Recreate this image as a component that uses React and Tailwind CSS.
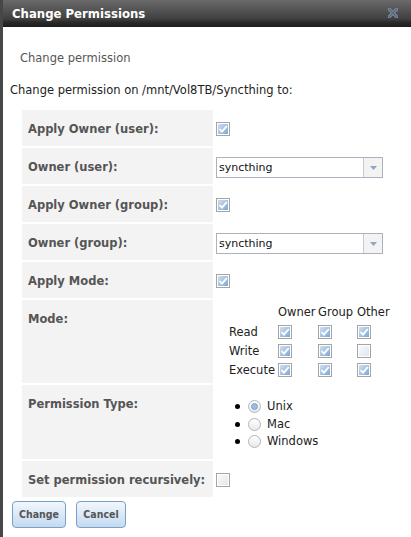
import React from "react";

function Check({ on = true }) {
  return (
    <span className="inline-block w-[14px] h-[14px] border border-[#a5a5a5] p-[1px] bg-white align-top">
      {on ? (
        <span className="relative block w-full h-full bg-[linear-gradient(135deg,#cfe0f2,#7ea7d4)]">
          <svg viewBox="0 0 10 10" className="absolute inset-0 w-full h-full">
            <path d="M1.6 5.2 L4 7.6 L8.8 2" fill="none" stroke="#ffffff" strokeWidth="1.9" />
          </svg>
        </span>
      ) : (
        <span className="block w-full h-full bg-[linear-gradient(135deg,#f7f9fc,#e1e7ef)]" />
      )}
    </span>
  );
}

function Radio({ on }) {
  return (
    <span className="inline-flex items-center justify-center w-[13px] h-[13px] rounded-full border border-[#b4b4b4] bg-[linear-gradient(180deg,#ffffff,#e6e9ee)]">
      {on && <span className="block w-[7px] h-[7px] rounded-full border border-[#7fa4cc] bg-[#9cbde0]" />}
    </span>
  );
}

function Select() {
  return (
    <div className="flex w-[167px] h-[21px] border border-[#abb2bd] bg-white">
      <div className="flex-1 pl-[2px] text-[11px] leading-[19px] text-[#111]">syncthing</div>
      <div className="w-[19px] border-l border-[#c5cad2] bg-[#f3f3f3] flex items-center justify-center">
        <svg viewBox="0 0 7 4" className="w-[7px] h-[4px]">
          <path d="M0 0 H7 L3.5 4 Z" fill="#8fa6c2" />
        </svg>
      </div>
    </div>
  );
}

function Row({ label, h = "h-[36px]", children, vclass = "pt-[12px]" }) {
  return (
    <div className={`flex ${h}`}>
      <div className="w-[191px] bg-[#f3f3f3] pl-[6px] pt-[12px] text-[11.5px] leading-[14px] font-bold text-[#555]">
        {label}
      </div>
      <div className={`flex-1 pl-[3px] ${vclass}`}>{children}</div>
    </div>
  );
}

export default function App() {
  return (
    <div className="w-[411px] h-[537px] bg-white border-l-[3px] border-[#474747] font-['DejaVu_Sans',sans-serif] overflow-hidden">
      <div className="relative h-[27px] bg-[linear-gradient(180deg,#6a6a6a_0%,#404040_70%,#2a2a2a_82%,#1c1c1c_100%)] flex items-center pl-[9px]">
        <span className="font-['DejaVu_Sans_Condensed','DejaVu_Sans',sans-serif] font-bold text-[13px] text-white leading-none">
          Change Permissions
        </span>
        <svg viewBox="0 0 11 11" className="absolute left-[385px] top-[8px] w-[10px] h-[10px]">
          <path d="M1.5 1.5 L9.5 9.5 M9.5 1.5 L1.5 9.5" stroke="#8795a8" strokeWidth="3.4" strokeLinecap="square" />
          <path d="M1.5 1.5 L9.5 9.5 M9.5 1.5 L1.5 9.5" stroke="#5a6a80" strokeWidth="1.8" strokeLinecap="square" />
        </svg>
      </div>

      <div className="pl-[17px] mt-[24px] text-[11.5px] leading-[14px] text-[#555]">Change permission</div>
      <div className="pl-[7px] mt-[18px] text-[11.5px] leading-[14px] text-[#222]">
        Change permission on /mnt/Vol8TB/Syncthing to:
      </div>

      <div className="ml-[19px] mt-[13px] flex flex-col gap-[2px]">
        <Row label="Apply Owner (user):">
          <Check />
        </Row>
        <Row label="Owner (user):" vclass="pt-[9px]">
          <Select />
        </Row>
        <Row label="Apply Owner (group):">
          <Check />
        </Row>
        <Row label="Owner (group):" vclass="pt-[9px]">
          <Select />
        </Row>
        <Row label="Apply Mode:">
          <Check />
        </Row>
        <Row label="Mode:" h="h-[83px]" vclass="pt-[5px]">
          <div className="ml-[13px] grid grid-cols-[49px_40px_39px_40px] text-[11.5px] leading-[14px] text-[#222]">
            <span />
            <span>Owner</span>
            <span>Group</span>
            <span>Other</span>
            {[
              ["Read", [true, true, true]],
              ["Write", [true, true, false]],
              ["Execute", [true, true, true]],
            ].map(([name, vals], i) => (
              <React.Fragment key={name}>
                <span className={`h-[14px] ${i === 0 ? "mt-[6px]" : "mt-[5px]"}`}>{name}</span>
                {vals.map((v, j) => (
                  <span key={j} className={`h-[14px] ${i === 0 ? "mt-[6px]" : "mt-[5px]"}`}>
                    <Check on={v} />
                  </span>
                ))}
              </React.Fragment>
            ))}
          </div>
        </Row>
        <Row label="Permission Type:" h="h-[74px]" vclass="pt-[13px]">
          <div className="flex flex-col text-[11.5px] text-[#222]">
            {[
              ["Unix", true],
              ["Mac", false],
              ["Windows", false],
            ].map(([name, on]) => (
              <div key={name} className="flex items-center h-[17.5px]">
                <span className="ml-[19px] w-[5px] h-[5px] rounded-full bg-black" />
                <span className="ml-[8px] flex">
                  <Radio on={on} />
                </span>
                <span className="ml-[6px]">{name}</span>
              </div>
            ))}
          </div>
        </Row>
        <Row label="Set permission recursively:">
          <Check on={false} />
        </Row>
      </div>

      <div className="ml-[9px] mt-[4px] flex gap-[10px]">
        {[
          ["Change", "w-[54px]"],
          ["Cancel", "w-[50px]"],
        ].map(([t, w]) => (
          <button
            key={t}
            className={`${w} h-[27px] rounded-[4px] border border-[#7c9fc4] bg-[linear-gradient(180deg,#f2f7fd,#c3daf2)] font-['DejaVu_Sans_Condensed','DejaVu_Sans',sans-serif] font-bold text-[10.5px] text-[#555] flex items-center justify-center`}
          >
            {t}
          </button>
        ))}
      </div>
    </div>
  );
}
